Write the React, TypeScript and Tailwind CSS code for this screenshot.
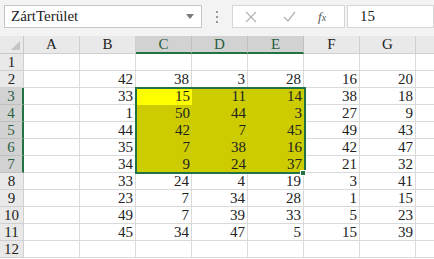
import React from "react"

const cols = ["A", "B", "C", "D", "E", "F", "G"]
const data: (number | null)[][] = [
  [null, null, null, null, null, null, null],
  [null, 42, 38, 3, 28, 16, 20],
  [null, 33, 15, 11, 14, 38, 18],
  [null, 1, 50, 44, 3, 27, 9],
  [null, 44, 42, 7, 45, 49, 43],
  [null, 35, 7, 38, 16, 42, 47],
  [null, 34, 9, 24, 37, 21, 32],
  [null, 33, 24, 4, 19, 3, 41],
  [null, 23, 7, 34, 28, 1, 15],
  [null, 49, 7, 39, 33, 5, 23],
  [null, 45, 34, 47, 5, 15, 39],
  [null, null, null, null, null, null, null],
]

function inSel(r: number, c: number) {
  return r >= 3 && r <= 7 && c >= 2 && c <= 4
}

export default function App() {
  return (
    <div className="w-[434px] h-[259px] overflow-hidden bg-white text-[15px] font-['Liberation_Serif','DejaVu_Serif','Times_New_Roman',serif]">
      {/* Formula bar */}
      <div className="h-[36px] bg-[#f3f3f3] flex items-start pt-[5px] pl-[4px]">
        <div className="w-[198px] h-[23px] bg-white border border-[#c6c6c6] flex items-center pl-[6px] pr-[6px] text-[#222]">
          <span className="flex-1 leading-none">ZártTerület</span>
          <svg width="8" height="5" viewBox="0 0 8 5" className="mr-[1px]">
            <path d="M0 0h8L4 5z" fill="#7a7a7a" />
          </svg>
        </div>
        <div className="w-[30px] h-[23px] flex flex-col items-center justify-center gap-[3px]">
          <span className="w-[2px] h-[2px] bg-[#9a9a9a]" />
          <span className="w-[2px] h-[2px] bg-[#9a9a9a]" />
          <span className="w-[2px] h-[2px] bg-[#9a9a9a]" />
        </div>
        <div className="w-[113px] h-[23px] bg-white border border-[#d6d6d6] flex items-center">
          <svg width="12" height="12" viewBox="0 0 12 12" className="ml-[12px]">
            <path d="M1 1l10 10M11 1L1 11" stroke="#b5b5b5" strokeWidth="1.3" />
          </svg>
          <svg width="13" height="11" viewBox="0 0 13 11" className="ml-[26px]">
            <path d="M1 6l4 4 7-9" stroke="#b5b5b5" strokeWidth="1.3" fill="none" />
          </svg>
          <span className="ml-[22px] italic text-[13px] text-[#555] leading-none">
            f<span className="text-[10px]">x</span>
          </span>
        </div>
        <div className="ml-[2px] flex-1 h-[23px] bg-white border border-[#d6d6d6] flex items-center pl-[12px] text-[#222]">
          15
        </div>
      </div>

      {/* Grid */}
      <div className="relative">
        <div className="grid grid-cols-[24px_repeat(7,56px)_1fr] grid-rows-[18px_repeat(12,17px)] text-[#222]">
          <div className="bg-[#e9e9e9] border-r border-b border-[#c8c8c8] flex items-end justify-end pr-[3px] pb-[3px]">
            <svg width="9" height="9" viewBox="0 0 9 9">
              <path d="M9 0v9H0z" fill="#c4c4c4" />
            </svg>
          </div>
          {cols.map((c, i) => {
            const sel = i >= 2 && i <= 4
            return (
              <div
                key={c}
                className={
                  sel
                    ? "bg-[#d2d2d2] border-r border-[#c0c0c0] border-b-2 border-b-[#217346] text-[#2a5e3f] flex items-center justify-center leading-none"
                    : "bg-[#e9e9e9] border-r border-b border-[#d0d0d0] flex items-center justify-center leading-none"
                }
              >
                {c}
              </div>
            )
          })}
          <div className="bg-[#e9e9e9] border-b border-[#d0d0d0]" />
          {data.map((row, r) => {
            const rn = r + 1
            const rsel = rn >= 3 && rn <= 7
            return (
              <React.Fragment key={rn}>
                <div
                  className={
                    rsel
                      ? "bg-[#d2d2d2] border-r-2 border-r-[#217346] border-b border-[#c0c0c0] text-[#2a5e3f] flex items-center justify-center leading-none"
                      : "bg-[#e9e9e9] border-r border-b border-[#d0d0d0] flex items-center justify-center leading-none"
                  }
                >
                  {rn}
                </div>
                {row.map((v, c) => {
                  let bg = "bg-white border-r border-b border-[#dadada]"
                  if (inSel(rn, c)) bg = rn === 3 && c === 2 ? "bg-[#ffff00] border-b border-[#ffff00]" : "bg-[#cccc00]"
                  return (
                    <div key={c} className={`${bg} flex items-center justify-end pr-[2px] leading-none`}>
                      {v ?? ""}
                    </div>
                  )
                })}
                <div className="bg-white border-b border-[#dadada]" />
              </React.Fragment>
            )
          })}
        </div>
        {/* selection outline */}
        <div className="absolute left-[135px] top-[51px] w-[171px] h-[87px] border-2 border-[#217346] pointer-events-none" />
        <div className="absolute left-[300px] top-[134px] w-[6px] h-[6px] bg-[#217346] border border-white" />
      </div>
    </div>
  )
}
